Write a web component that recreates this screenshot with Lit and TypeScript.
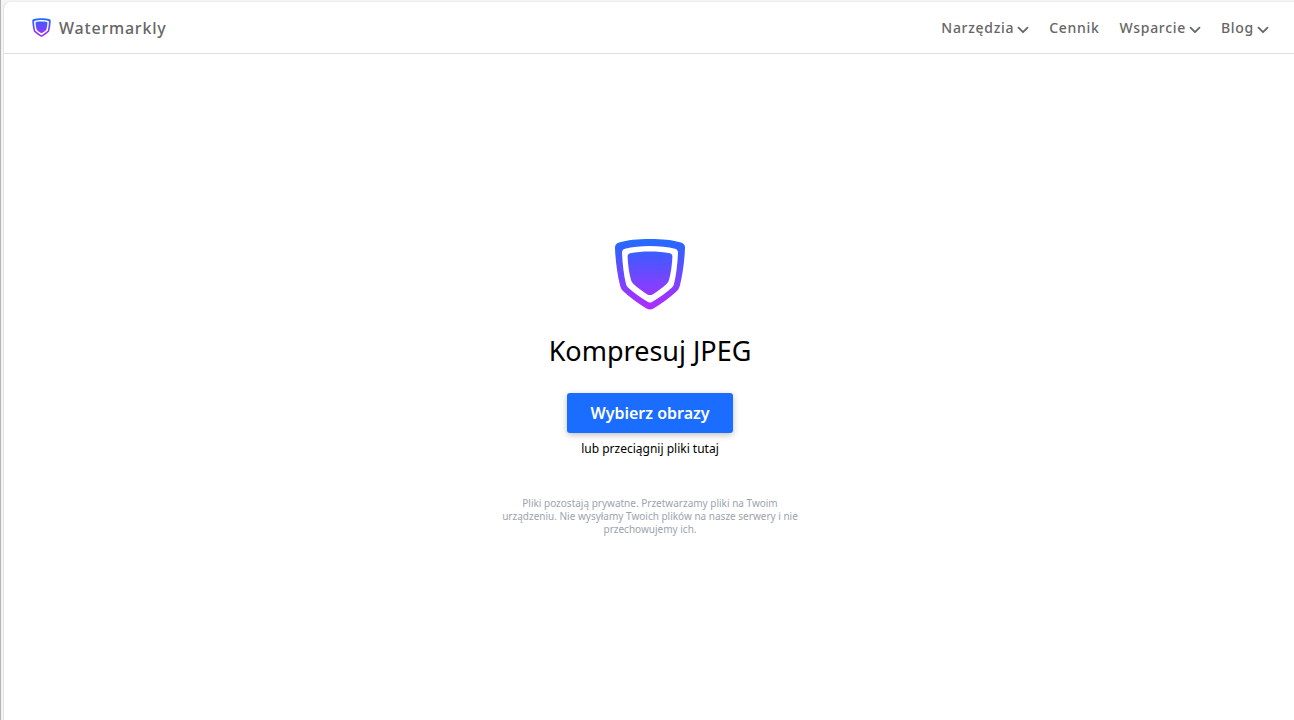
import { LitElement, html, css } from "lit";
import { customElement, property } from "lit/decorators.js";

@customElement("shield-logo")
class ShieldLogo extends LitElement {
  static styles = css`
    :host {
      display: block;
    }
    .mark {
      display: block;
      width: 100%;
      height: 100%;
    }
  `;

  render() {
    return html`
      <svg class="mark" viewBox="0 0 72 72" aria-hidden="true">
        <defs>
          <linearGradient id="fill" gradientUnits="userSpaceOnUse" x1="36" y1="0" x2="36" y2="72">
            <stop offset="0" stop-color="#1f6dff" />
            <stop offset="0.25" stop-color="#4459ff" />
            <stop offset="1" stop-color="#b42aff" />
          </linearGradient>
        </defs>
        <path
          fill="url(#fill)"
          fill-rule="evenodd"
          d="M36 1C48 1 59 2 67 4.500Q71.300 6 71 10C70.500 24 68.500 37 65.800 48Q65 51 63 53C56 59.500 48 65.500 39.500 70.500Q36 72.500 32.500 70.500C24 65.500 16 59.500 9 53Q7 51 6.200 48C3.500 37 1.500 24 1 10Q.7 6 5 4.500C13 2 24 1 36 1Z
          M36 8C27 8 18 9 11 10.800Q7.800 11.800 8 15C8.500 26 9.800 37 12 46Q12.500 48 14 49.500C20 55 27 60 34 64Q36 65 38 64C45 60 52 55 58 49.500Q59.500 48 60 46C62.200 37 63.500 26 64 15Q64.200 11.800 61 10.800C54 9 45 8 36 8Z"
        />
        <path
          fill="url(#fill)"
          d="M36 13.500C43 13.500 50 14 56 15.300Q58.600 16 58.400 18.800C58 27 57 35 55 42Q54.400 44.300 52.500 46C48 50 43.500 53.500 39 56.200Q36 58 33 56.200C28.500 53.500 24 50 19.500 46Q17.600 44.300 17 42C15 35 14 27 13.600 18.800Q13.400 16 16 15.300C22 14 29 13.500 36 13.500Z"
        />
      </svg>
    `;
  }
}

interface NavEntry {
  label: string;
  menu: boolean;
}

@customElement("site-header")
class SiteHeader extends LitElement {
  @property({ attribute: false }) entries: NavEntry[] = [];

  static styles = css`
    :host {
      display: block;
    }
    .bar {
      display: flex;
      align-items: center;
      justify-content: space-between;
      height: 51px;
      padding: 0 25px 0 28px;
      border-bottom: 1px solid #dedede;
      color: #666;
      font-weight: 500;
    }
    .brand {
      display: flex;
      align-items: center;
      gap: 8px;
      color: inherit;
      font-size: 16px;
      line-height: 24px;
      letter-spacing: 0.05em;
      text-decoration: none;
    }
    .logo {
      width: 19px;
      height: 19px;
    }
    .nav {
      display: flex;
      align-items: center;
      gap: 20px;
    }
    .entry {
      display: flex;
      align-items: center;
      gap: 3px;
      margin: 0;
      padding: 0;
      border: 0;
      background: none;
      color: inherit;
      font: inherit;
      font-size: 14px;
      line-height: 24px;
      letter-spacing: 0.05em;
      text-decoration: none;
      cursor: pointer;
    }
    .chevron {
      width: 12px;
      height: 12px;
      margin-top: 4px;
      fill: none;
      stroke: currentColor;
      stroke-width: 1.8;
    }
  `;

  private renderEntry(entry: NavEntry) {
    if (!entry.menu) {
      return html`<a class="entry" href="#">${entry.label}</a>`;
    }
    return html`
      <button class="entry" type="button" aria-haspopup="true">
        ${entry.label}
        <svg class="chevron" viewBox="0 0 12 12" aria-hidden="true">
          <path d="M1.500 3.700 6 8.200l4.500-4.500" stroke-linecap="round" stroke-linejoin="round" />
        </svg>
      </button>
    `;
  }

  render() {
    return html`
      <header class="bar">
        <a class="brand" href="#"><shield-logo class="logo"></shield-logo>Watermarkly</a>
        <nav class="nav">${this.entries.map((entry) => this.renderEntry(entry))}</nav>
      </header>
    `;
  }
}

@customElement("app-root")
class AppRoot extends LitElement {
  private entries: NavEntry[] = [
    { label: "Narzędzia", menu: true },
    { label: "Cennik", menu: false },
    { label: "Wsparcie", menu: true },
    { label: "Blog", menu: true },
  ];

  static styles = css`
    :host {
      display: flex;
      box-sizing: border-box;
      min-height: 100vh;
      padding: 1px 0 0 2px;
      border-left: 1px solid #b4b4b4;
      background: #f4f4f4;
      color: #000;
      font-family: "Segoe UI", "Noto Sans", sans-serif;
    }
    .page {
      display: flex;
      flex: 1;
      flex-direction: column;
      border-top: 1px solid #ececec;
      border-left: 1px solid #e4e4e4;
      border-top-left-radius: 8px;
      background: #fff;
    }
    .main {
      display: flex;
      flex: 1;
      flex-direction: column;
      align-items: center;
      justify-content: center;
      padding-left: 2px;
      text-align: center;
    }
    .logo {
      width: 72px;
      height: 72px;
    }
    .title {
      margin: 21px 0 22px;
      font-size: 27px;
      font-weight: 400;
      line-height: 40px;
    }
    .pick {
      height: 40px;
      padding: 0 23px;
      border: 0;
      border-radius: 3px;
      background: #1a6dff;
      box-shadow: 0 2px 6px rgba(0, 0, 0, 0.25);
      color: #fff;
      font: inherit;
      font-size: 16px;
      font-weight: 600;
      cursor: pointer;
    }
    .hint {
      margin: 7px 0 39px;
      font-size: 12px;
      line-height: 18px;
    }
    .privacy {
      max-width: 310px;
      margin: 0;
      color: #9ca3af;
      font-size: 10px;
      line-height: 13px;
    }
  `;

  render() {
    return html`
      <div class="page">
        <site-header .entries=${this.entries}></site-header>
        <main class="main">
          <shield-logo class="logo"></shield-logo>
          <h1 class="title">Kompresuj JPEG</h1>
          <button class="pick" type="button">Wybierz obrazy</button>
          <p class="hint">lub przeciągnij pliki tutaj</p>
          <p class="privacy">
            Pliki pozostają prywatne. Przetwarzamy pliki na Twoim urządzeniu. Nie wysyłamy Twoich
            plików na nasze serwery i nie przechowujemy ich.
          </p>
        </main>
      </div>
    `;
  }
}
